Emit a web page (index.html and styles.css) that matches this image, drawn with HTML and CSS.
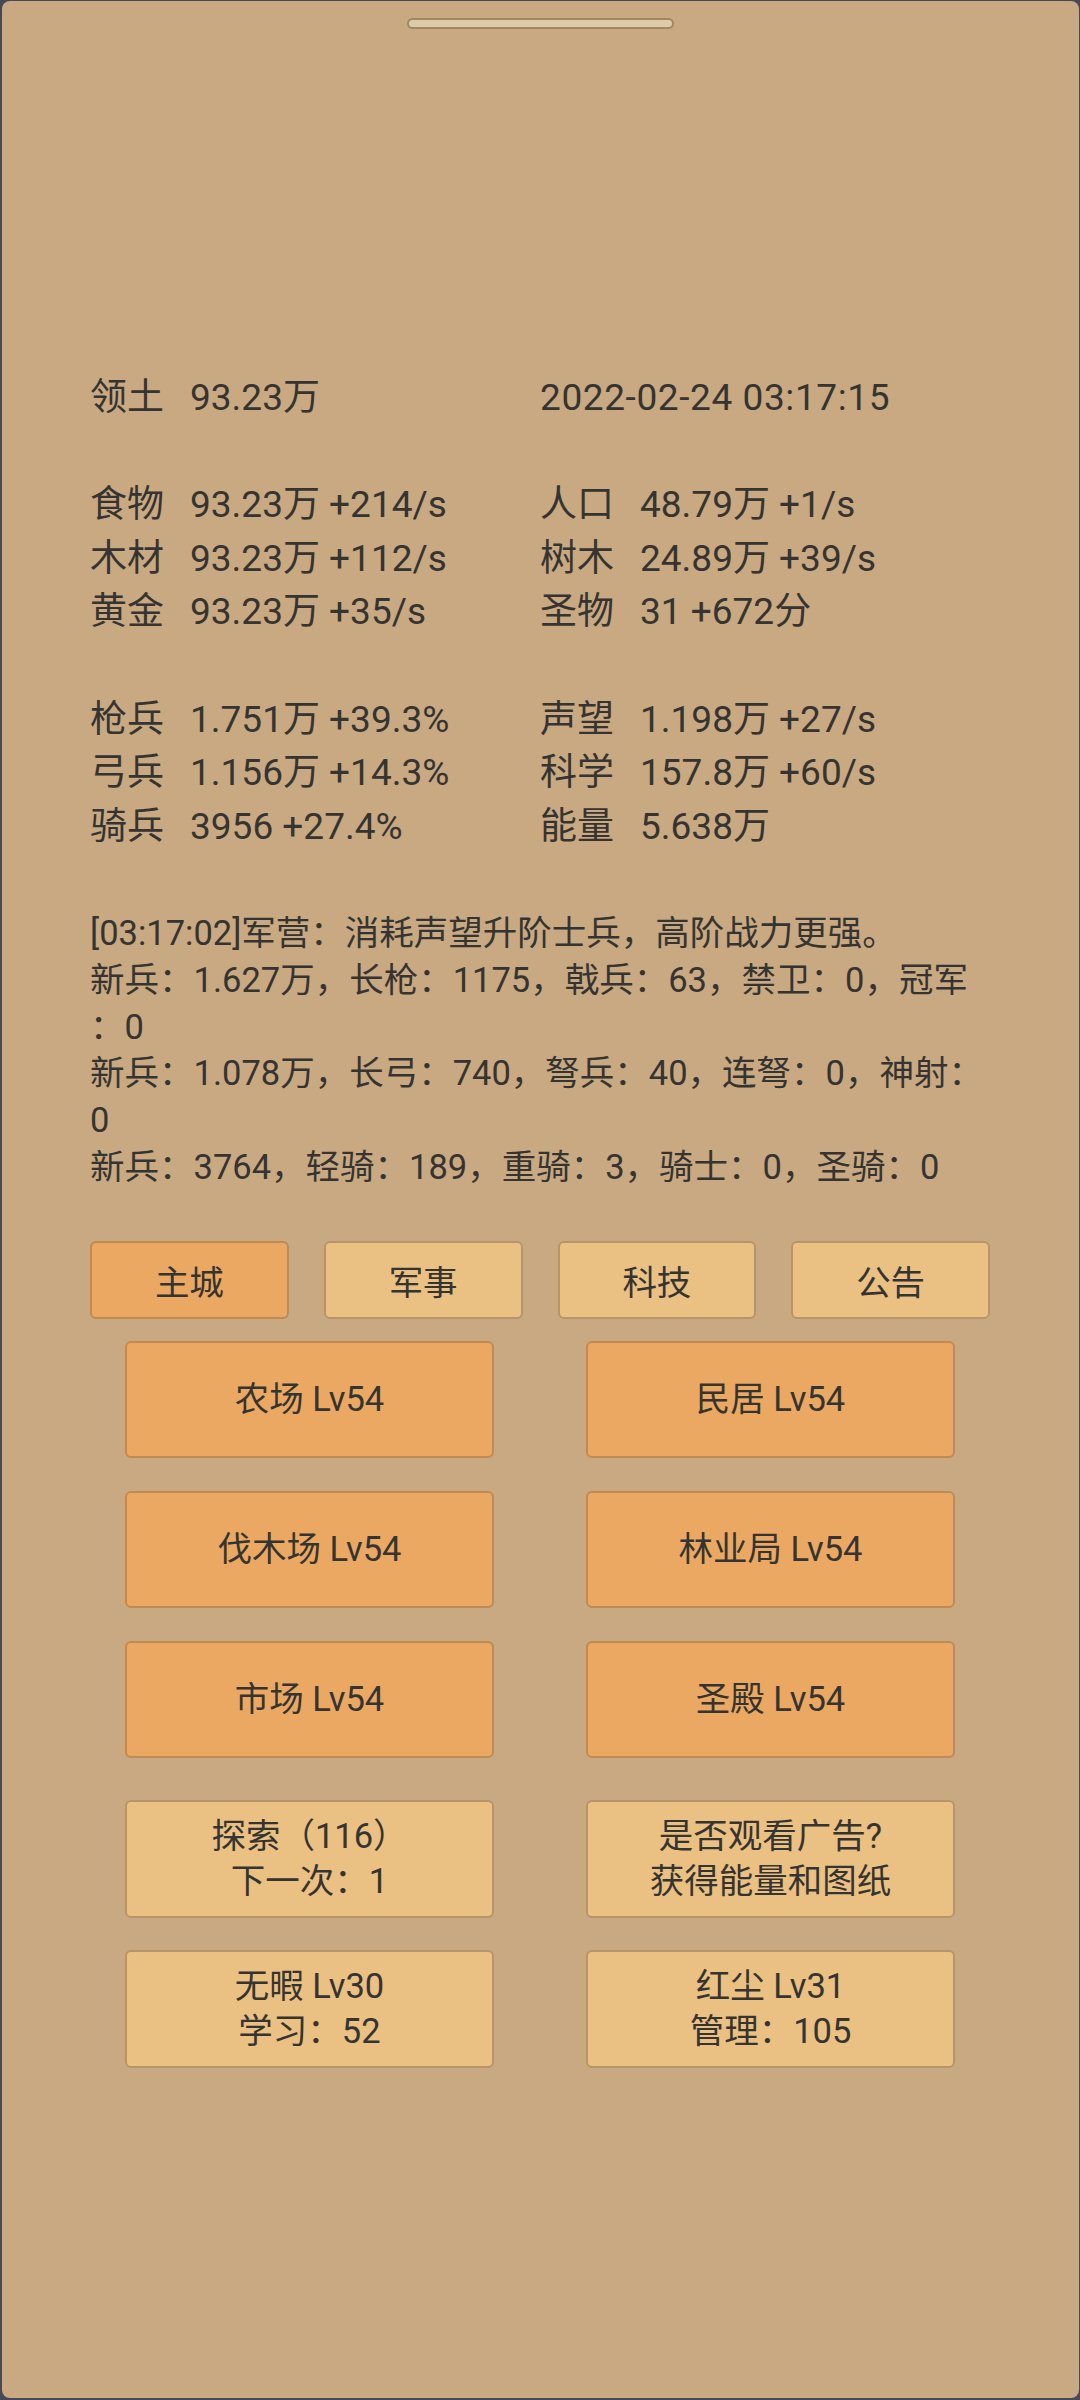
FILE: index.html
```html
<!DOCTYPE html>
<html lang="zh-CN">
<head>
<meta charset="utf-8">
<title>主城</title>
<link rel="stylesheet" href="styles.css">
</head>
<body>
<div class="sheet">
  <div class="handle"></div>
  <div class="content">
    <div class="stats">
      <div class="row">
        <div><span class="k">领土</span>93.23万</div>
        <div class="date">2022-02-24 03:17:15</div>
      </div>
      <div class="group">
        <div class="row">
          <div><span class="k">食物</span>93.23万 +214/s</div>
          <div><span class="k">人口</span>48.79万 +1/s</div>
        </div>
        <div class="row">
          <div><span class="k">木材</span>93.23万 +112/s</div>
          <div><span class="k">树木</span>24.89万 +39/s</div>
        </div>
        <div class="row">
          <div><span class="k">黄金</span>93.23万 +35/s</div>
          <div><span class="k">圣物</span>31 +672分</div>
        </div>
      </div>
      <div class="group">
        <div class="row">
          <div><span class="k">枪兵</span>1.751万 +39.3%</div>
          <div><span class="k">声望</span>1.198万 +27/s</div>
        </div>
        <div class="row">
          <div><span class="k">弓兵</span>1.156万 +14.3%</div>
          <div><span class="k">科学</span>157.8万 +60/s</div>
        </div>
        <div class="row">
          <div><span class="k">骑兵</span>3956 +27.4%</div>
          <div><span class="k">能量</span>5.638万</div>
        </div>
      </div>
    </div>

    <div class="log">
      <div>[03:17:02]军营：消耗声望升阶士兵，高阶战力更强。</div>
      <div>新兵：1.627万，长枪：1175，戟兵：63，禁卫：0，冠军</div>
      <div>：0</div>
      <div>新兵：1.078万，长弓：740，弩兵：40，连弩：0，神射：</div>
      <div>0</div>
      <div>新兵：3764，轻骑：189，重骑：3，骑士：0，圣骑：0</div>
    </div>

    <div class="tabs">
      <div class="tab active">主城</div>
      <div class="tab">军事</div>
      <div class="tab">科技</div>
      <div class="tab">公告</div>
    </div>

    <div class="grid buildings">
      <div class="btn orange">农场 Lv54</div>
      <div class="btn orange">民居 Lv54</div>
      <div class="btn orange">伐木场 Lv54</div>
      <div class="btn orange">林业局 Lv54</div>
      <div class="btn orange">市场 Lv54</div>
      <div class="btn orange">圣殿 Lv54</div>
    </div>

    <div class="grid actions">
      <div class="btn light"><span>探索（116）</span><span>下一次：1</span></div>
      <div class="btn light"><span>是否观看广告?</span><span>获得能量和图纸</span></div>
      <div class="btn light"><span>无暇 Lv30</span><span>学习：52</span></div>
      <div class="btn light"><span>红尘 Lv31</span><span>管理：105</span></div>
    </div>
  </div>
</div>
</body>
</html>
```

FILE: styles.css
```css
html, body {
  margin: 0;
  padding: 0;
}

body {
  background: #464959;
  font-family: Roboto, "Noto Sans CJK SC", sans-serif;
  color: #363431;
}

.sheet {
  margin: 1px 1px 2px 2px;
  height: 2397px;
  box-sizing: border-box;
  background: #c9a982;
  border-radius: 8px;
  padding-top: 17px;
  overflow: hidden;
}

.handle {
  width: 267px;
  height: 11px;
  margin: 0 auto;
  box-sizing: border-box;
  background: #dccba9;
  border: 2px solid #9f8862;
  border-radius: 6px;
}

.content {
  padding: 0 89px 0 88px;
}

.stats {
  margin-top: 342px;
  font-size: 37px;
  line-height: 53.6px;
}

.row {
  display: grid;
  grid-template-columns: 1fr 1fr;
  white-space: nowrap;
}

.date {
  letter-spacing: 0.6px;
}

.k {
  display: inline-block;
  width: 100px;
}

.group {
  margin-top: 53.6px;
}

.log {
  margin-top: 56.6px;
  font-size: 34.5px;
  line-height: 46.8px;
  white-space: nowrap;
}

.tabs {
  margin-top: 50px;
  display: grid;
  grid-template-columns: repeat(4, 1fr);
  column-gap: 35px;
}

.tab {
  height: 78px;
  box-sizing: border-box;
  display: flex;
  align-items: center;
  justify-content: center;
  font-size: 34.5px;
  background: #ebc083;
  border: 2px solid #b8946a;
  border-radius: 6px;
}

.tab.active {
  background: #eba862;
  border-color: #c08a55;
}

.grid {
  display: grid;
  grid-template-columns: 1fr 1fr;
  column-gap: 92px;
  padding: 0 35px;
}

.buildings {
  margin-top: 22px;
  row-gap: 33px;
}

.actions {
  margin-top: 42px;
  row-gap: 32px;
}

.btn {
  box-sizing: border-box;
  display: flex;
  flex-direction: column;
  align-items: center;
  justify-content: center;
  font-size: 34.5px;
  line-height: 45px;
  border-radius: 6px;
  white-space: nowrap;
}

.btn.orange {
  height: 117px;
  background: #eba862;
  border: 2px solid #c08a55;
}

.btn.light {
  height: 118px;
  background: #ebc083;
  border: 2px solid #b8946a;
}
```
